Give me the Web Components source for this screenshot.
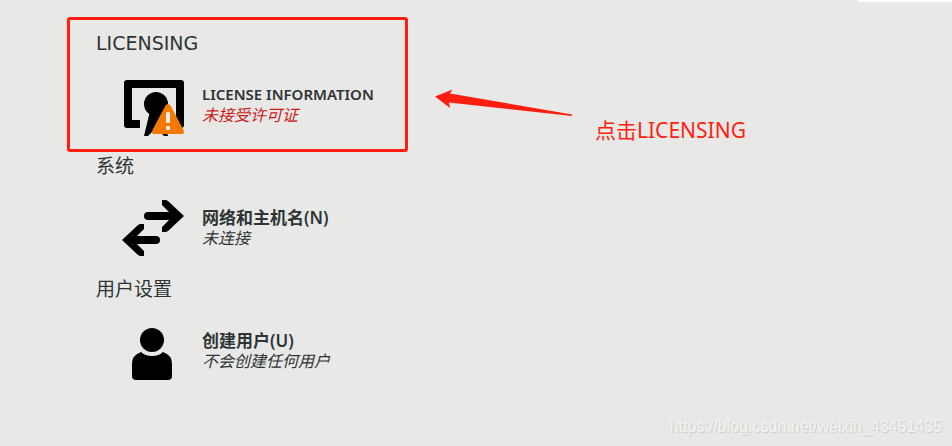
<!DOCTYPE html>
<html lang="zh-CN">
<head>
<meta charset="utf-8">
<title>安装信息摘要</title>
<style>
    html{
        --color-page: #e8e8e6;
        --color-text: #2e3436;
        --color-warning: #cc1a1a;
        --color-mark: #ff1e10;
        --font-ui: "Noto Sans", "Noto Sans CJK SC", sans-serif;
        --font-heading: "DejaVu Sans", "Noto Sans CJK SC", sans-serif;
    }
    body{
        margin: 0;
        min-height: 100vh;
        background: var(--color-page);
        color: var(--color-text);
        font-family: var(--font-ui);
    }
</style>
</head>
<body>
<install-hub></install-hub>

<script>
const ICONS = {
    license: `
        <path d="M5 4H59Q62 4 62 7V49Q62 52 59 52H46V44H54V12H10V44H18V52H5Q2 52 2 49V7Q2 4 5 4Z"/>
        <circle cx="34" cy="28" r="12"/>
        <path d="M28 35L22 60H26L34 52L42 60H46L40 35Z"/>
        <path fill="#f57900" d="M43.500 29.500Q46 26.500 48.500 29.500L61.500 54Q63 58 60 58H32Q29 58 30.500 54Z"/>
        <rect x="44" y="36" width="4" height="11" rx="1.500" fill="#eeeeec"/>
        <rect x="44" y="50" width="4" height="4" rx="1" fill="#eeeeec"/>`,
    network: `
        <path d="M40 1H43Q45 1 46 2L62 17L46 32Q45 33 43 33H40V28L47 21H26Q22 21 22 17Q22 13 26 13H47L40 6Z"/>
        <path d="M22 25H19Q17 25 16 26L0 41L16 56Q17 57 19 57H22V52L15 45H34Q38 45 38 41Q38 37 34 37H15L22 30Z"/>`,
    user: `
        <circle cx="30" cy="18" r="12"/>
        <path d="M19 30Q23 34 30 34Q37 34 41 30Q50 33 50 42V54Q50 58 46 58H14Q10 58 10 54V42Q10 33 19 30Z"/>`
};

class HubIcon extends HTMLElement {
    constructor() {
        super();
        this.attachShadow({ mode: "open" });
    }
    connectedCallback() {
        this.shadowRoot.innerHTML = `
            <style>
                :host{
                    display: block;
                    flex: none;
                    width: 64px;
                    height: 64px;
                }
                svg{
                    display: block;
                    width: 100%;
                    height: 100%;
                }
            </style>
            <svg viewBox="0 0 64 64" aria-hidden="true">${ICONS[this.getAttribute("name")]}</svg>
        `;
    }
}

//One clickable entry: icon, title and its status line.
class HubSpoke extends HTMLElement {
    constructor() {
        super();
        this.attachShadow({ mode: "open" });
    }
    connectedCallback() {
        this.shadowRoot.innerHTML = `
            <style>
                :host{
                    display: block;
                }
                button{
                    display: flex;
                    align-items: flex-start;
                    gap: 16px;
                    padding: 0;
                    border: 0;
                    background: none;
                    color: inherit;
                    font: inherit;
                    text-align: left;
                    cursor: pointer;
                }
                .Labels{
                    display: flex;
                    flex-direction: column;
                    padding-top: 8px;
                    font-size: 16px;
                    line-height: 21px;
                }
                .Title{
                    font-size: var(--spoke-title-size, 17px);
                    font-weight: 600;
                }
                .Status{
                    font-style: italic;
                }
                :host([warning]) .Status{
                    color: var(--color-warning);
                }
            </style>
            <button type="button">
                <hub-icon name="${this.getAttribute("icon")}"></hub-icon>
                <span class="Labels">
                    <span class="Title"><slot></slot></span>
                    <span class="Status"><slot name="status"></slot></span>
                </span>
            </button>
        `;
    }
}

class HubSection extends HTMLElement {
    constructor() {
        super();
        this.attachShadow({ mode: "open" });
    }
    connectedCallback() {
        this.shadowRoot.innerHTML = `
            <style>
                :host{
                    display: flex;
                    flex-direction: column;
                    gap: 21px;
                }
                h2{
                    margin: 0;
                    font-family: var(--font-heading);
                    font-size: 19px;
                    font-weight: 400;
                    line-height: 24px;
                }
                .Spokes{
                    padding-left: 26px;
                }
            </style>
            <h2>${this.getAttribute("heading")}</h2>
            <div class="Spokes"><slot></slot></div>
        `;
    }
}

//Red frame, arrow and caption laid over the hub.
class HubMarkup extends HTMLElement {
    constructor() {
        super();
        this.attachShadow({ mode: "open" });
    }
    connectedCallback() {
        this.shadowRoot.innerHTML = `
            <style>
                :host{
                    position: absolute;
                    inset: 0;
                    pointer-events: none;
                    color: var(--color-mark);
                }
                .Frame{
                    position: absolute;
                    left: 67px;
                    top: 17px;
                    box-sizing: border-box;
                    width: 341px;
                    height: 135px;
                    border: 3px solid;
                    border-radius: 3px;
                }
                .Arrow{
                    position: absolute;
                    left: 435px;
                    top: 88px;
                    width: 138px;
                    height: 30px;
                    fill: currentColor;
                }
                .Caption{
                    position: absolute;
                    left: 595px;
                    top: 116px;
                    margin: 0;
                    font-size: 21px;
                    line-height: 28px;
                    white-space: nowrap;
                }
            </style>
            <div class="Frame"></div>
            <svg class="Arrow" viewBox="0 0 138 30" aria-hidden="true">
                <path d="M0 8.500L17.500 1.500L15 5.500L137 26.500V28L14 14.500L15 20Z"/>
            </svg>
            <p class="Caption"><slot></slot></p>
        `;
    }
}

class InstallHub extends HTMLElement {
    constructor() {
        super();
        this.attachShadow({ mode: "open" });
    }
    connectedCallback() {
        this.shadowRoot.innerHTML = `
            <style>
                :host{
                    display: block;
                    position: relative;
                    box-sizing: border-box;
                    min-height: 100vh;
                    padding: 31px 96px 48px;
                }
                main{
                    display: flex;
                    flex-direction: column;
                    gap: 14px;
                }
                .Latin{
                    --spoke-title-size: 15px;
                }
                .Edge{
                    position: absolute;
                    top: 0;
                    right: 0;
                    width: 94px;
                    height: 2px;
                    background: #fdfdfd;
                }
                .Watermark{
                    position: absolute;
                    right: 10px;
                    bottom: 8px;
                    color: #f4f4f3;
                    font-family: "Liberation Sans", sans-serif;
                    font-size: 16px;
                    line-height: 22px;
                    text-shadow: 1px 1px 1px #c8c8c6;
                }
            </style>
            <main>
                <hub-section heading="LICENSING">
                    <hub-spoke class="Latin" icon="license" warning>LICENSE INFORMATION<span slot="status">未接受许可证</span></hub-spoke>
                </hub-section>
                <hub-section heading="系统">
                    <hub-spoke icon="network">网络和主机名(N)<span slot="status">未连接</span></hub-spoke>
                </hub-section>
                <hub-section heading="用户设置">
                    <hub-spoke icon="user">创建用户(U)<span slot="status">不会创建任何用户</span></hub-spoke>
                </hub-section>
            </main>
            <div class="Edge"></div>
            <hub-markup>点击LICENSING</hub-markup>
            <span class="Watermark">https://blog.csdn.net/weixin_43451435</span>
        `;
    }
}

customElements.define("hub-icon", HubIcon);
customElements.define("hub-spoke", HubSpoke);
customElements.define("hub-section", HubSection);
customElements.define("hub-markup", HubMarkup);
customElements.define("install-hub", InstallHub);
</script>
</body>
</html>
